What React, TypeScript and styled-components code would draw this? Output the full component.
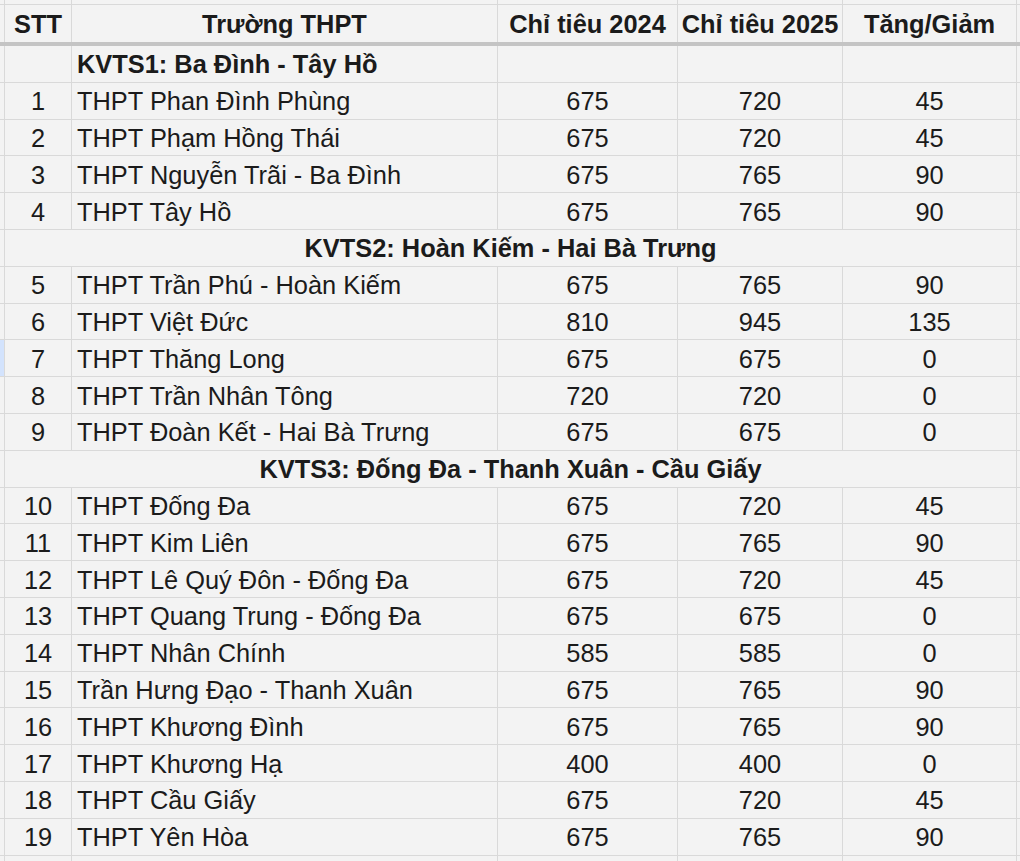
import React from "react";
import styled, { createGlobalStyle } from "styled-components";

const GlobalStyle = createGlobalStyle`
  html, body {
    margin: 0;
    padding: 0;
    background: #f3f3f3;
    overflow: hidden;
  }
`;

const COLS = "5px 67px 426px 180px 165px 174px 3px";

const Sheet = styled.div`
  display: flex;
  flex-direction: column;
  width: 1020px;
  height: 861px;
  overflow: hidden;
  background: #f3f3f3;
  font-family: "Liberation Sans", Arial, sans-serif;
  font-size: 25.4px;
  color: #1b1b1b;
`;

const Row = styled.div<{ $h: number; $thick?: boolean }>`
  display: grid;
  grid-template-columns: ${COLS};
  height: ${(p) => p.$h}px;
  flex: none;
  box-sizing: border-box;
  border-bottom: ${(p) => (p.$thick ? "4px solid #c4c4c4" : "1px solid #d9d9d9")};
`;

const Cell = styled.div<{ $align?: "left" | "center"; $bold?: boolean; $span?: number }>`
  display: flex;
  align-items: center;
  justify-content: ${(p) => (p.$align === "left" ? "flex-start" : "center")};
  padding: ${(p) => (p.$align === "left" ? "2px 0 0 5px" : "2px 0 0 0")};
  box-sizing: border-box;
  border-right: 1px solid #d9d9d9;
  font-weight: ${(p) => (p.$bold ? 700 : 400)};
  white-space: nowrap;
  overflow: hidden;
  ${(p) => (p.$span ? `grid-column: span ${p.$span};` : "")}
`;

const Edge = styled.div<{ $active?: boolean }>`
  box-sizing: border-box;
  border-right: 1px solid #d9d9d9;
  background: ${(p) => (p.$active ? "#d3e3fd" : "transparent")};
`;

type School = { stt: number; name: string; a: number; b: number };
type Group = { title: string; merged: boolean; schools: School[] };

const groups: Group[] = [
  {
    title: "KVTS1: Ba Đình - Tây Hồ",
    merged: false,
    schools: [
      { stt: 1, name: "THPT Phan Đình Phùng", a: 675, b: 720 },
      { stt: 2, name: "THPT Phạm Hồng Thái", a: 675, b: 720 },
      { stt: 3, name: "THPT Nguyễn Trãi - Ba Đình", a: 675, b: 765 },
      { stt: 4, name: "THPT Tây Hồ", a: 675, b: 765 },
    ],
  },
  {
    title: "KVTS2: Hoàn Kiếm - Hai Bà Trưng",
    merged: true,
    schools: [
      { stt: 5, name: "THPT Trần Phú - Hoàn Kiếm", a: 675, b: 765 },
      { stt: 6, name: "THPT Việt Đức", a: 810, b: 945 },
      { stt: 7, name: "THPT Thăng Long", a: 675, b: 675 },
      { stt: 8, name: "THPT Trần Nhân Tông", a: 720, b: 720 },
      { stt: 9, name: "THPT Đoàn Kết - Hai Bà Trưng", a: 675, b: 675 },
    ],
  },
  {
    title: "KVTS3: Đống Đa - Thanh Xuân - Cầu Giấy",
    merged: true,
    schools: [
      { stt: 10, name: "THPT Đống Đa", a: 675, b: 720 },
      { stt: 11, name: "THPT Kim Liên", a: 675, b: 765 },
      { stt: 12, name: "THPT Lê Quý Đôn - Đống Đa", a: 675, b: 720 },
      { stt: 13, name: "THPT Quang Trung - Đống Đa", a: 675, b: 675 },
      { stt: 14, name: "THPT Nhân Chính", a: 585, b: 585 },
      { stt: 15, name: "Trần Hưng Đạo - Thanh Xuân", a: 675, b: 765 },
      { stt: 16, name: "THPT Khương Đình", a: 675, b: 765 },
      { stt: 17, name: "THPT Khương Hạ", a: 400, b: 400 },
      { stt: 18, name: "THPT Cầu Giấy", a: 675, b: 720 },
      { stt: 19, name: "THPT Yên Hòa", a: 675, b: 765 },
    ],
  },
];

const ROW_H = 36.8;

const EmptyRow = ({ h }: { h: number }) => (
  <Row $h={h}>
    <Edge />
    <Cell />
    <Cell />
    <Cell />
    <Cell />
    <Cell />
    <div />
  </Row>
);

export default function App() {
  return (
    <>
      <GlobalStyle />
      <Sheet>
        <EmptyRow h={5} />
        <Row $h={41} $thick>
          <Edge />
          <Cell $bold>STT</Cell>
          <Cell $bold>Trường THPT</Cell>
          <Cell $bold>Chỉ tiêu 2024</Cell>
          <Cell $bold>Chỉ tiêu 2025</Cell>
          <Cell $bold>Tăng/Giảm</Cell>
          <div />
        </Row>
        {groups.map((g) => (
          <React.Fragment key={g.title}>
            {g.merged ? (
              <Row $h={ROW_H}>
                <Edge />
                <Cell $bold $span={5}>
                  {g.title}
                </Cell>
                <div />
              </Row>
            ) : (
              <Row $h={ROW_H}>
                <Edge />
                <Cell />
                <Cell $bold $align="left">
                  {g.title}
                </Cell>
                <Cell />
                <Cell />
                <Cell />
                <div />
              </Row>
            )}
            {g.schools.map((s) => (
              <Row $h={ROW_H} key={s.stt}>
                <Edge $active={s.stt === 7} />
                <Cell>{s.stt}</Cell>
                <Cell $align="left">{s.name}</Cell>
                <Cell>{s.a}</Cell>
                <Cell>{s.b}</Cell>
                <Cell>{s.b - s.a}</Cell>
                <div />
              </Row>
            ))}
          </React.Fragment>
        ))}
        <EmptyRow h={ROW_H} />
      </Sheet>
    </>
  );
}
